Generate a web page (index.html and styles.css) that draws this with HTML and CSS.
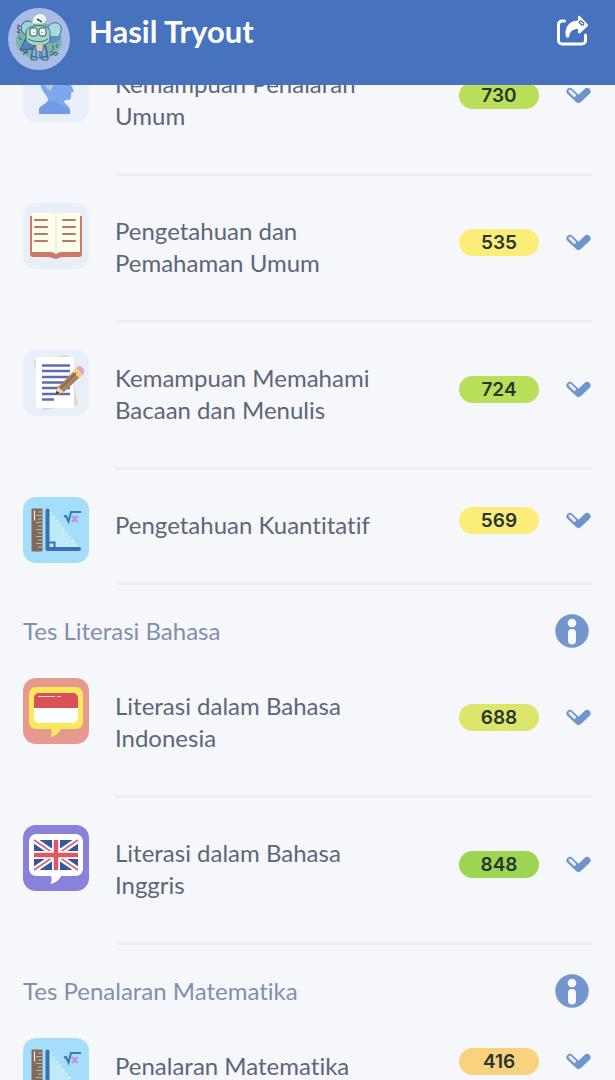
FILE: index.html
```html
<!DOCTYPE html>
<html lang="id">
<head>
<meta charset="utf-8">
<meta name="viewport" content="width=device-width, initial-scale=1">
<title>Hasil Tryout</title>
<link rel="stylesheet" href="styles.css">
</head>
<body>
<svg class="defs" aria-hidden="true">
  <symbol id="check" viewBox="0 0 25 17">
    <path d="M4 4.500L12.500 12.500L21 4.500" fill="none" stroke="#6f94cb" stroke-width="7" stroke-linecap="round" stroke-linejoin="round"/>
    <path d="M4 4L8.500 8.300" stroke="#e9f0fb" stroke-width="3" stroke-linecap="round"/>
  </symbol>
  <symbol id="info" viewBox="0 0 34 34">
    <circle cx="17" cy="17" r="16.700" fill="#7595cf"/>
    <circle cx="17" cy="9" r="4.300" fill="#f8faff"/>
    <rect x="13" y="15" width="8" height="15.500" rx="4" fill="#f8faff"/>
  </symbol>
  <symbol id="math" viewBox="0 0 66 66">
    <rect width="66" height="66" rx="13" fill="#a5defa"/>
    <rect x="8.500" y="11.500" width="11" height="43" rx="1" fill="#806a60"/>
    <path d="M15 15h4M13 18.500h6M15 22h4M13 25.500h6M15 29h4M13 32.500h6M15 36h4M13 39.500h6M15 43h4M13 46.500h6M15 50h4" stroke="#c5b5a5" stroke-width="1.200"/>
    <path d="M11.500 13.500v10" stroke="#f4efe9" stroke-width="1.200"/>
    <path d="M26 15L55 51H26z" fill="#bfeaf8"/>
    <path d="M27 15L54 49" stroke="#d5efdf" stroke-width="2" stroke-dasharray="3 2"/>
    <path d="M24.500 13.500V52H56" fill="none" stroke="#3971b1" stroke-width="4" stroke-linecap="round" stroke-linejoin="round"/>
    <path d="M25 45.500h6.500V52" fill="none" stroke="#3971b1" stroke-width="2"/>
    <path d="M41 19.500l2-.500 2.500 5.500 2.500-9.500h10" fill="none" stroke="#347bb0" stroke-width="2"/>
    <path d="M49 19l5.500 6M54.500 19L49 25" stroke="#bd91dc" stroke-width="2.200"/>
  </symbol>
</svg>

<div class="app">
<header class="topbar">
  <svg class="avatar" viewBox="0 0 62 62" role="img" aria-label="Foto profil">
    <circle cx="31" cy="31" r="31" fill="#a9bce5"/>
    <ellipse cx="31" cy="33" rx="23" ry="18" fill="#79b3ae"/>
    <path d="M12 42l6-12 6 11z" fill="#5484c8" stroke="#365980"/>
    <circle cx="20" cy="20" r="7" fill="#9bd6d1" stroke="#365d6c"/>
    <path d="M40 19c5-8 15-4 13 4-1 7-7 12-13 10z" fill="#a6dce0" stroke="#416f80"/>
    <path d="M39 28h14c-1 6-9 9-13 6z" fill="#5c91cb"/>
    <path d="M18 24c0-8 24-9 24 0v8c-3 8-21 8-24 0z" fill="#9ed8c4" stroke="#3d6b75"/>
    <path d="M24 16c-1-12 14-14 15-4l-4 4z" fill="#f3f8ee" stroke="#8fc1b4"/>
    <path d="M29 11l5 3" stroke="#395665" stroke-width="1.500"/>
    <rect x="22" y="20" width="7" height="8" rx="2" fill="#eef9f5" stroke="#315268"/>
    <rect x="31" y="20" width="7" height="8" rx="2" fill="#eef9f5" stroke="#315268"/>
    <path d="M26 24v1M34 24v1M20 31c6 3 14 4 20 0M45 37v5M49 36v4" stroke="#315268" stroke-width=".8" fill="none"/>
    <path d="M25 38h13l2 12H23z" fill="#5b8bc1" stroke="#315268" stroke-width=".8"/>
    <path d="M28 37h7l-1 6h-5z" fill="#eac4ad"/>
    <path d="M30 44v7M26 42v6M36 42v6" stroke="#c1dcec"/>
    <path d="M23 49h6v3h-6zM34 49h6v3h-6z" fill="#7cb4c2" stroke="#315268" stroke-width=".8"/>
    <path d="M9 17l3 1-3 2 3 2-3 2 3 1M11 29l2 3M15 43l5 2M15 47l5-5" stroke="#314f70" fill="none"/>
    <path d="M42 45c1-3 4-1 4 1s3 2 4-1M42 46c2 3 3 0 4-1s3-1 4 1" stroke="#314f70" fill="none"/>
  </svg>
  <h1 class="title">Hasil Tryout</h1>
  <button class="icon-button" type="button" aria-label="Bagikan">
    <svg class="share" viewBox="0 0 34 32">
      <path d="M8.500 6H6a3.500 3.500 0 0 0-3.500 3.500v16A3.500 3.500 0 0 0 6 29h20a3.500 3.500 0 0 0 3.500-3.500V20" fill="none" stroke="#fff" stroke-width="3" stroke-linecap="round"/>
      <path d="M22 2.500c0-2 1.300-2 2.300-1l7 7.500c1 1 1 1.500 0 2.500l-7 6.500c-1.200 1-2.300.500-2.300-1V14c-5 0-8 2-8.800 7.500-.300 2-3.200 1.700-3.500-.500C8.500 12 13 6 22 5.500z" fill="#fff"/>
      <ellipse cx="25.500" cy="8" rx="2.600" ry="1.300" transform="rotate(40 25.500 8)" fill="#fff" stroke="#4a6598" stroke-width="1.300"/>
    </svg>
  </button>
</header>

<main class="results">
  <section>
    <article class="row">
      <svg class="subject" viewBox="0 0 66 66" aria-hidden="true">
        <rect width="66" height="66" rx="13" fill="#e9eff9"/>
        <path d="M17 24c0-16 30-16 31 0v5l3 6-3 2v4c0 3-2 3-5 3l-2 1c0 3 6 5 6 9v4H16v-4c0-4 8-5 9-10 0-5-8-8-8-20z" fill="#7ea8ee"/>
        <path d="M24 46c6-3 10 0 14 3l9 5v4H16v-4c0-4 5-5 8-8z" fill="#719be5"/>
        <path d="M21 29h10l-4 6z" fill="#b2cec7"/>
      </svg>
      <div class="detail"><h3 class="name">Kemampuan Penalaran Umum</h3><span class="score green">730</span><button class="icon-button" type="button" aria-label="Lihat rincian Kemampuan Penalaran Umum"><svg class="check"><use href="#check"/></svg></button></div>
    </article>
    <article class="row">
      <svg class="subject" viewBox="0 0 66 66" aria-hidden="true">
        <rect width="66" height="66" rx="13" fill="#e9eff9"/>
        <path d="M7 13h52v38c0 3-2 3-4 3H39l-6 2-7-2H10c-2 0-3-1-3-3z" fill="#cc7a68"/>
        <path d="M9 10h21c2 0 3 1 3 2 0-1 1-2 3-2h21v39H37l-4 2-4-2H9z" fill="#fffdeb"/>
        <path d="M33 12v38" stroke="#d9e8d2"/>
        <path d="M12 17h12M12 24h12M12 31h12M12 38h12M40 17h12M40 24h12M40 31h12M40 38h12" stroke="#b77867" stroke-width="2" stroke-linecap="round"/>
      </svg>
      <div class="detail"><h3 class="name">Pengetahuan dan Pemahaman Umum</h3><span class="score yellow">535</span><button class="icon-button" type="button" aria-label="Lihat rincian Pengetahuan dan Pemahaman Umum"><svg class="check"><use href="#check"/></svg></button></div>
    </article>
    <article class="row">
      <svg class="subject" viewBox="0 0 66 66" aria-hidden="true">
        <rect width="66" height="66" rx="13" fill="#e9eff9"/>
        <path d="M11 10l34-5 10 50-35 5z" fill="#e7d8bd"/>
        <rect x="13" y="7" width="38" height="51" rx="2" fill="#fff"/>
        <path d="M19 15.500h28M19 21h28M19 27h28M19 32.500h28M19 38h28M19 44h28M19 49.500h12" stroke="#5c6eae" stroke-width="2.600"/>
        <path d="M32 45l3-8 17-17 6 6-17 16z" fill="#ab815f"/>
        <path d="M32 45l3-8 6 5z" fill="#f5d4a4"/>
        <path d="M32 45l1.500-4 3.500 2z" fill="#333b56"/>
        <path d="M50 22l3-4 7 7-4 3z" fill="#f2d16f"/>
        <path d="M53 18c4-5 11 1 7 7z" fill="#e7a0cc"/>
        <path d="M38 38l15-15" stroke="#80634f" stroke-width="1.300"/>
      </svg>
      <div class="detail"><h3 class="name">Kemampuan Memahami Bacaan dan Menulis</h3><span class="score green">724</span><button class="icon-button" type="button" aria-label="Lihat rincian Kemampuan Memahami Bacaan dan Menulis"><svg class="check"><use href="#check"/></svg></button></div>
    </article>
    <article class="row">
      <svg class="subject" aria-hidden="true"><use href="#math"/></svg>
      <div class="detail"><h3 class="name">Pengetahuan Kuantitatif</h3><span class="score yellow">569</span><button class="icon-button" type="button" aria-label="Lihat rincian Pengetahuan Kuantitatif"><svg class="check"><use href="#check"/></svg></button></div>
    </article>
  </section>

  <section>
    <header class="group"><h2 class="group-title">Tes Literasi Bahasa</h2><button class="icon-button" type="button" aria-label="Info Tes Literasi Bahasa"><svg class="info"><use href="#info"/></svg></button></header>
    <article class="row">
      <svg class="subject" viewBox="0 0 66 66" aria-hidden="true">
        <rect width="66" height="66" rx="13" fill="#e59a8d"/>
        <path d="M14 9h38c5 0 8 3 8 8v26c0 5-3 8-8 8H38c-2 4-5 7-11 8 2-2 2-5 1-8H14c-5 0-8-3-8-8V17c0-5 3-8 8-8z" fill="#fce85b"/>
        <rect x="11" y="15" width="44" height="30" rx="5" fill="#fff"/>
        <path d="M11 30V20c0-3 2-5 5-5h34c3 0 5 2 5 5v10z" fill="#d95057"/>
        <path d="M15 18.500h17M34 18.500h4" stroke="#f9d6d4" stroke-width="1.200"/>
      </svg>
      <div class="detail"><h3 class="name">Literasi dalam Bahasa Indonesia</h3><span class="score lime">688</span><button class="icon-button" type="button" aria-label="Lihat rincian Literasi dalam Bahasa Indonesia"><svg class="check"><use href="#check"/></svg></button></div>
    </article>
    <article class="row">
      <svg class="subject" viewBox="0 0 66 66" aria-hidden="true">
        <rect width="66" height="66" rx="13" fill="#8981dc"/>
        <path d="M14 9h38c5 0 8 3 8 8v26c0 5-3 8-8 8H38c-2 4-5 7-11 8 2-2 2-5 1-8H14c-5 0-8-3-8-8V17c0-5 3-8 8-8z" fill="#fff"/>
        <rect x="11" y="15" width="44" height="30" fill="#36569f"/>
        <path d="M11 15l44 30M55 15L11 45" stroke="#fff" stroke-width="6"/>
        <path d="M11 15l44 30M55 15L11 45" stroke="#ce6680" stroke-width="1.600"/>
        <path d="M33 15v30M11 30h44" stroke="#fff" stroke-width="8"/>
        <path d="M33 15v30M11 30h44" stroke="#df5865" stroke-width="4.500"/>
      </svg>
      <div class="detail"><h3 class="name">Literasi dalam Bahasa Inggris</h3><span class="score strong">848</span><button class="icon-button" type="button" aria-label="Lihat rincian Literasi dalam Bahasa Inggris"><svg class="check"><use href="#check"/></svg></button></div>
    </article>
  </section>

  <section>
    <header class="group"><h2 class="group-title">Tes Penalaran Matematika</h2><button class="icon-button" type="button" aria-label="Info Tes Penalaran Matematika"><svg class="info"><use href="#info"/></svg></button></header>
    <article class="row">
      <svg class="subject" aria-hidden="true"><use href="#math"/></svg>
      <div class="detail"><h3 class="name">Penalaran Matematika</h3><span class="score orange">416</span><button class="icon-button" type="button" aria-label="Lihat rincian Penalaran Matematika"><svg class="check"><use href="#check"/></svg></button></div>
    </article>
  </section>
</main>
</div>
</body>
</html>
```
FILE: styles.css
```css
* { box-sizing: border-box; }
body {
  margin: 0;
  background: #f5f7fb;
  color: #5d6678;
  font-family: Lato, "Noto Sans", sans-serif;
  font-variant-ligatures: none;
}
h1, h2, h3 { margin: 0; }
svg { display: block; }
.defs { display: none; }
.app { height: 100vh; overflow: hidden; }
.topbar {
  position: fixed;
  inset: 0 0 auto;
  z-index: 1;
  display: flex;
  align-items: flex-start;
  gap: 19px;
  padding: 8px 25px 15px 8px;
  background: #4772bd;
}
.avatar { width: 62px; height: 62px; }
.title {
  flex: 1;
  color: #fff;
  font-size: 31px;
  font-weight: 700;
  line-height: 46px;
}
.icon-button {
  flex: none;
  padding: 0;
  border: 0;
  background: none;
  cursor: pointer;
}
.share { width: 34px; height: 32px; margin-top: 7px; }
.results { padding: 29px 23px 0; }
.row { display: flex; gap: 26px; padding-top: 27px; }
.subject { flex: none; width: 66px; height: 66px; }
.detail {
  flex: 1;
  display: flex;
  align-items: center;
  padding: 0 1px 38px 0;
  border-bottom: 3px solid #eceef2;
}
.name {
  flex: 1;
  padding: 12px 60px 3px 0;
  font-size: 24px;
  font-weight: 400;
  line-height: 32px;
}
.score {
  width: 80px;
  margin-right: 27px;
  border-radius: 14px;
  color: #29352f;
  font-family: Inter, sans-serif;
  font-size: 19px;
  font-weight: 600;
  line-height: 27px;
  text-align: center;
}
.green { background: #b9df5b; }
.yellow { background: #fbed79; }
.lime { background: #dce66d; }
.strong { background: #9bd552; }
.orange { background: #f8d27c; }
.check { width: 25px; height: 17px; }
.group {
  display: flex;
  align-items: center;
  justify-content: space-between;
  padding: 29px 3px 3px 0;
}
.group-title {
  color: #8090ac;
  font-size: 24px;
  font-weight: 400;
  line-height: 34px;
}
.info { width: 34px; height: 34px; }
```
